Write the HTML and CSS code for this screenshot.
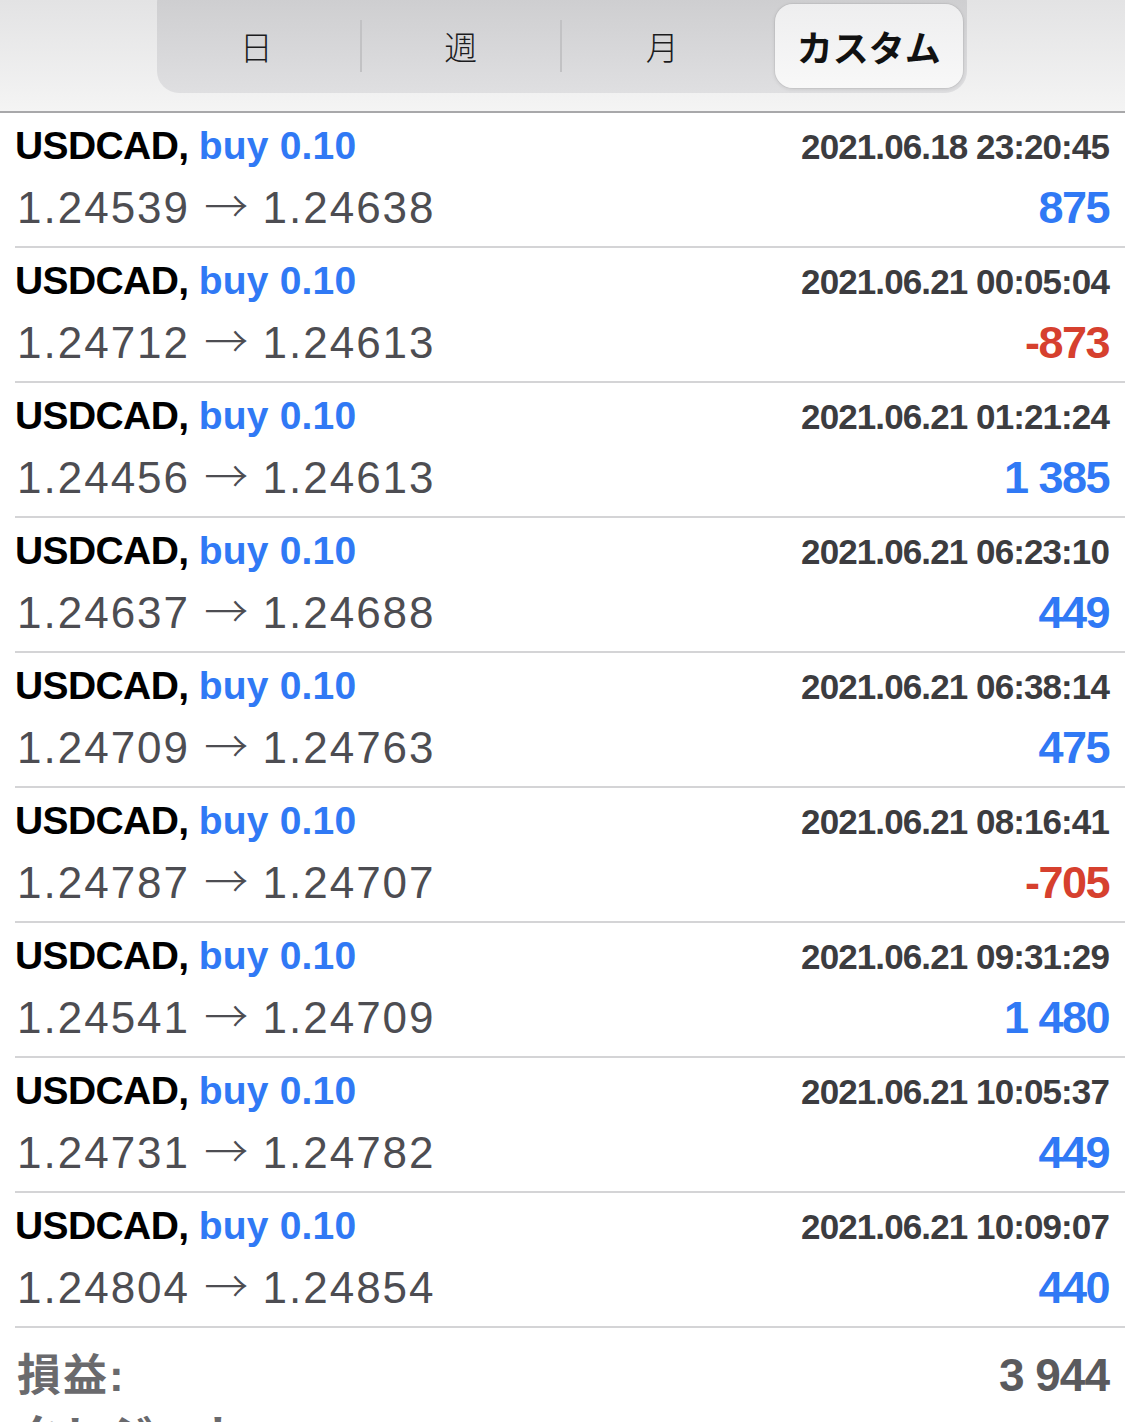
FILE: index.html
```html
<!doctype html>
<html>
<head>
<meta charset="utf-8">
<link rel="stylesheet" href="styles.css">
</head>
<body>
<header class="toolbar">
	<nav class="segmented">
		<span class="seg split">日</span>
		<span class="seg split">週</span>
		<span class="seg">月</span>
		<span class="seg active">カスタム</span>
	</nav>
</header>

<ul class="deals">
	<li class="deal">
		<div class="line top"><span class="title">USDCAD, <b>buy 0.10</b></span><span class="time">2021.06.18 23:20:45</span></div>
		<div class="line bottom"><span class="prices">1.24539 <i class="arrow">→</i> 1.24638</span><span class="profit">875</span></div>
	</li>
	<li class="deal">
		<div class="line top"><span class="title">USDCAD, <b>buy 0.10</b></span><span class="time">2021.06.21 00:05:04</span></div>
		<div class="line bottom"><span class="prices">1.24712 <i class="arrow">→</i> 1.24613</span><span class="profit loss">-873</span></div>
	</li>
	<li class="deal">
		<div class="line top"><span class="title">USDCAD, <b>buy 0.10</b></span><span class="time">2021.06.21 01:21:24</span></div>
		<div class="line bottom"><span class="prices">1.24456 <i class="arrow">→</i> 1.24613</span><span class="profit">1 385</span></div>
	</li>
	<li class="deal">
		<div class="line top"><span class="title">USDCAD, <b>buy 0.10</b></span><span class="time">2021.06.21 06:23:10</span></div>
		<div class="line bottom"><span class="prices">1.24637 <i class="arrow">→</i> 1.24688</span><span class="profit">449</span></div>
	</li>
	<li class="deal">
		<div class="line top"><span class="title">USDCAD, <b>buy 0.10</b></span><span class="time">2021.06.21 06:38:14</span></div>
		<div class="line bottom"><span class="prices">1.24709 <i class="arrow">→</i> 1.24763</span><span class="profit">475</span></div>
	</li>
	<li class="deal">
		<div class="line top"><span class="title">USDCAD, <b>buy 0.10</b></span><span class="time">2021.06.21 08:16:41</span></div>
		<div class="line bottom"><span class="prices">1.24787 <i class="arrow">→</i> 1.24707</span><span class="profit loss">-705</span></div>
	</li>
	<li class="deal">
		<div class="line top"><span class="title">USDCAD, <b>buy 0.10</b></span><span class="time">2021.06.21 09:31:29</span></div>
		<div class="line bottom"><span class="prices">1.24541 <i class="arrow">→</i> 1.24709</span><span class="profit">1 480</span></div>
	</li>
	<li class="deal">
		<div class="line top"><span class="title">USDCAD, <b>buy 0.10</b></span><span class="time">2021.06.21 10:05:37</span></div>
		<div class="line bottom"><span class="prices">1.24731 <i class="arrow">→</i> 1.24782</span><span class="profit">449</span></div>
	</li>
	<li class="deal">
		<div class="line top"><span class="title">USDCAD, <b>buy 0.10</b></span><span class="time">2021.06.21 10:09:07</span></div>
		<div class="line bottom"><span class="prices">1.24804 <i class="arrow">→</i> 1.24854</span><span class="profit">440</span></div>
	</li>
</ul>

<div class="summary">
	<div class="sumline"><span class="label">損益:</span><span class="value">3 944</span></div>
	<div class="sumline"><span class="label">クレジット:</span><span class="value"></span></div>
</div>
</body>
</html>
```

FILE: styles.css
```css
body{
	margin:0px;
	padding:0px;
	background:#fff;
	font-family:"Liberation Sans", "Noto Sans CJK JP", sans-serif;
	overflow:hidden;
}

/* top bar with the period switch */
.toolbar{
	height:111px;
	background:linear-gradient(#e3e3e4, #f4f4f4);
	border-bottom:2px solid #a8a8aa;
	overflow:hidden;
}
.segmented{
	display:grid;
	grid-template-columns:repeat(4, 1fr);
	width:810px;
	height:112px;
	box-sizing:border-box;
	margin:-19px 0 0 157px;
	padding:23px 4px 5px 4px;
	border-radius:22px;
	background:linear-gradient(#cbcbcd, #dfdfe1);
}
.seg{
	display:flex;
	align-items:center;
	justify-content:center;
	align-self:center;
	height:52px;
	font-family:"Noto Sans CJK JP", sans-serif;
	font-size:33px;
	font-weight:300;
	color:#1c1c1e;
}
.seg.split{
	border-right:2px solid #c2c2c4;
}
.seg:first-child{
	padding-right:8px;
}
.seg.active{
	align-self:stretch;
	height:auto;
	margin-left:12px;
	border-radius:18px;
	background:linear-gradient(#eeeeef, #f8f8f8);
	box-shadow:0 1px 4px rgba(0,0,0,0.12), 0 0 0 1px rgba(0,0,0,0.04);
	font-size:36px;
	font-weight:bold;
	color:#111;
}

/* deals list */
.deals{
	list-style:none;
	margin:0px;
	padding:0px;
}
.deal{
	margin-left:15px;
	padding:6px 16px 11px 0px;
	height:116px;
	border-bottom:2px solid #d4d4d6;
}
.line{
	display:flex;
	justify-content:space-between;
	align-items:baseline;
	white-space:nowrap;
}
.line.top{
	height:54px;
	line-height:54px;
}
.line.bottom{
	height:62px;
	line-height:62px;
}
.title{
	font-size:39px;
	font-weight:bold;
	color:#000;
	letter-spacing:-0.6px;
}
.title b{
	color:#3079f5;
	letter-spacing:0.2px;
}
.time{
	font-size:35px;
	font-weight:bold;
	color:#3c3c3f;
	letter-spacing:-0.9px;
}
.prices{
	padding-left:2px;
	font-size:44px;
	color:#4d4d52;
	letter-spacing:2px;
}
.arrow{
	font-style:normal;
	font-family:"Noto Sans CJK JP", sans-serif;
	font-weight:300;
	letter-spacing:0px;
}
.profit{
	font-size:45px;
	font-weight:bold;
	color:#3079f5;
	letter-spacing:-1.5px;
}
.profit.loss{
	color:#d6402e;
}

/* totals */
.summary{
	margin-left:15px;
	padding:16px 16px 0px 2px;
}
.sumline{
	display:flex;
	justify-content:space-between;
	align-items:baseline;
	height:62px;
	line-height:62px;
	font-size:44px;
	font-weight:bold;
	color:#6a6a6d;
}
.sumline .label{
	letter-spacing:2px;
}
.sumline .value{
	font-size:46px;
	color:#5a5a5d;
	letter-spacing:-1px;
}
```
